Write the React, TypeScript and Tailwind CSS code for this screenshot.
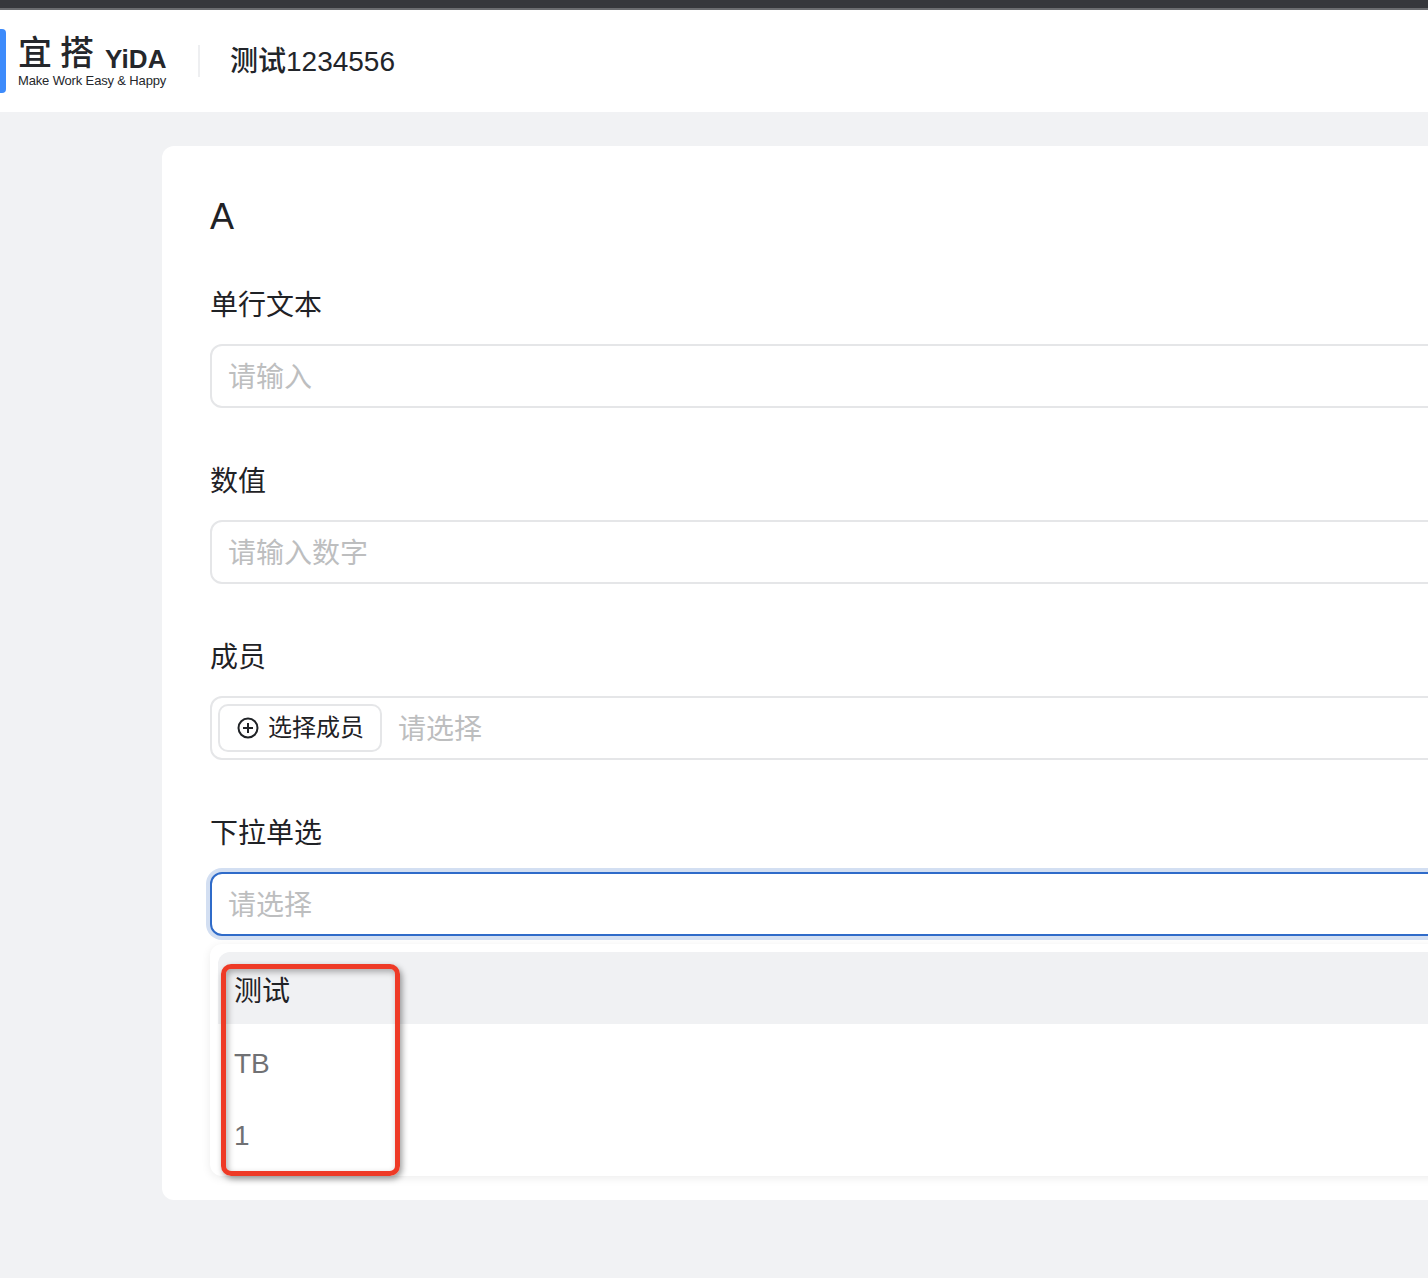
import React from "react";

const font = { fontFamily: '"Liberation Sans", "Noto Sans CJK SC", sans-serif' };

function Field({ label, children }: { label: string; children: React.ReactNode }) {
  return (
    <div className="mb-[52px]">
      <div className="h-[40px] leading-[40px] text-[28px] text-[#1f2226] mb-[20px] pt-[2px]">{label}</div>
      {children}
    </div>
  );
}

function Input({ placeholder }: { placeholder: string }) {
  return (
    <div className="h-[64px] border-2 border-[#e5e6e8] rounded-[12px] pl-[16px] pt-[4px] flex items-center text-[28px] text-[#bdbebf] bg-white">
      {placeholder}
    </div>
  );
}

export default function App() {
  return (
    <div className="w-[1428px] h-[1278px] overflow-hidden bg-[#f1f2f4] relative" style={font}>
      <div className="h-[8px] bg-[#36373c]" />
      <div className="h-[2px] bg-[#6b6c70]" />
      <header className="h-[102px] bg-white flex items-center">
        <div className="w-[6px] h-[64px] bg-[#3d8bfb] rounded-r-[4px]" />
        <div className="ml-[12px] w-[150px] mt-[1px] text-[#25272b]">
          <div className="flex items-end h-[38px]">
            <span className="text-[34px] leading-[38px] font-medium tracking-[8px] w-[87px] whitespace-nowrap">宜搭</span>
            <span className="text-[26px] leading-[28px] font-bold tracking-[0.1px] mb-[-1px]">YiDA</span>
          </div>
          <div className="text-[13px] leading-[16px] mt-[1px] tracking-[-0.15px] font-medium whitespace-nowrap">Make Work Easy &amp; Happy</div>
        </div>
        <div className="w-[2px] h-[32px] bg-[#eeeff1] ml-[30px]" />
        <div className="ml-[30px] text-[28px] leading-[40px] text-[#22252a] font-medium mt-[2px] whitespace-nowrap">测试1234556</div>
      </header>
      <main className="ml-[162px] mt-[34px] w-[1400px] h-[1054px] bg-white rounded-[12px] pl-[48px] pr-[48px] pt-[49px] relative">
        <div className="text-[36px] leading-[44px] text-[#1f2226] mb-[45px]">A</div>
        <Field label="单行文本"><Input placeholder="请输入" /></Field>
        <Field label="数值"><Input placeholder="请输入数字" /></Field>
        <Field label="成员">
          <div className="h-[64px] border-2 border-[#e5e6e8] rounded-[12px] pl-[6px] flex items-center bg-white">
            <div className="h-[48px] w-[164px] border-2 border-[#e5e6e8] rounded-[10px] flex items-center pl-[17px] text-[24px] text-[#1f2226]">
              <svg width="22" height="22" viewBox="0 0 22 22" fill="none" stroke="#1f2226" strokeWidth="2" className="mr-[9px]">
                <circle cx="11" cy="11" r="9.5" />
                <path d="M11 6v10M6 11h10" />
              </svg>
              <span className="whitespace-nowrap">选择成员</span>
            </div>
            <span className="ml-[16px] mt-[3px] text-[28px] text-[#bdbebf]">请选择</span>
          </div>
        </Field>
        <Field label="下拉单选">
          <div className="h-[64px] border-2 border-[#2f6bc9] rounded-[12px] pl-[16px] pt-[4px] flex items-center text-[28px] text-[#bdbebf] bg-white shadow-[0_0_0_4px_#d3dff2]">
            请选择
          </div>
          <div className="absolute left-[48px] right-0 top-[798px] h-[232px] bg-white rounded-[12px] p-[8px] pr-0 shadow-[0_2px_10px_rgba(0,0,0,0.08)]">
            <div className="h-[72px] pl-[16px] pt-[8px] flex items-center bg-[#f0f1f3] rounded-t-[12px] text-[28px] text-[#1f2226]">测试</div>
            <div className="h-[72px] pl-[16px] pt-[8px] flex items-center text-[28px] text-[#707174]">TB</div>
            <div className="h-[72px] pl-[16px] pt-[8px] flex items-center text-[28px] text-[#707174]">1</div>
          </div>
        </Field>
      </main>
      <div className="absolute left-[221px] top-[964px] w-[179px] h-[212px] border-[5px] border-[#ee3a26] rounded-[10px] shadow-[2px_3px_6px_rgba(0,0,0,0.4),inset_2px_3px_6px_rgba(0,0,0,0.3)]" />
    </div>
  );
}
